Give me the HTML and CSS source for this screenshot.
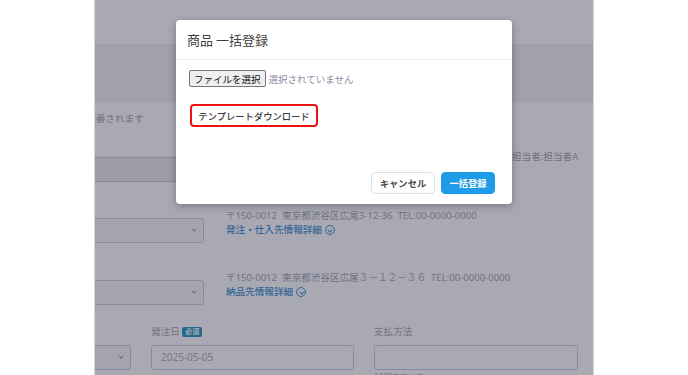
FILE: index.html
```html
<!DOCTYPE html>
<html lang="ja">
<head>
    <meta charset="UTF-8">
    <meta name="viewport" content="width=device-width, initial-scale=1.0">
    <title>商品 一括登録</title>
    <link rel="stylesheet" href="styles.css">
</head>
<body>
    <div class="shot">
        <div class="page">
            <div class="topbar"></div>
            <div class="titlebar"></div>

            <div class="form">
                <p class="note">自動採番されます</p>

                <div class="row row-first">
                    <div class="input filled wide"></div>
                    <span class="staff">担当者:担当者A</span>
                </div>

                <div class="row row-addr">
                    <div class="select short"><span class="chev"></span></div>
                    <div class="addr">
                        <div class="addr-text">〒150-0012&nbsp; 東京都渋谷区広尾3-12-36&nbsp; TEL:00-0000-0000</div>
                        <a class="addr-link">発注・仕入先情報詳細<span class="circle-chev"></span></a>
                    </div>
                </div>

                <div class="row row-addr">
                    <div class="select short"><span class="chev"></span></div>
                    <div class="addr">
                        <div class="addr-text">〒150-0012&nbsp; 東京都渋谷区広尾３－１２－３６&nbsp; TEL:00-0000-0000</div>
                        <a class="addr-link">納品先情報詳細<span class="circle-chev"></span></a>
                    </div>
                </div>

                <div class="row row-fields">
                    <div class="field field-small">
                        <div class="label">&nbsp;</div>
                        <div class="select tiny"><span class="chev"></span></div>
                    </div>
                    <div class="field field-date">
                        <div class="label">発注日 <span class="badge">必須</span></div>
                        <div class="input">2025-05-05</div>
                    </div>
                    <div class="field field-pay">
                        <div class="label">支払方法</div>
                        <div class="input"></div>
                        <div class="hint">1000文字以内</div>
                    </div>
                </div>
            </div>
        </div>

        <div class="backdrop"></div>

        <div class="modal">
            <div class="modal-header">商品 一括登録</div>
            <div class="modal-body">
                <div class="file-row">
                    <button class="file-btn">ファイルを選択</button>
                    <span class="file-name">選択されていません</span>
                </div>
                <button class="btn-template">テンプレートダウンロード</button>
            </div>
            <div class="modal-footer">
                <button class="btn btn-cancel">キャンセル</button>
                <button class="btn btn-primary">一括登録</button>
            </div>
        </div>
    </div>
</body>
</html>
```

FILE: styles.css
```css
* {
    box-sizing: border-box;
}
body {
    margin: 0;
    background: #fff;
    font-family: "Noto Sans", "Noto Sans CJK JP", sans-serif;
}
.shot {
    position: relative;
    width: 500px;
    height: 375px;
    margin-left: 94px;
    overflow: hidden;
    border-left: 1px solid #d6d6d6;
    border-right: 1px solid #d6d6d6;
}
.page {
    background: #fff;
    height: 100%;
}
.topbar {
    height: 44px;
    background: #fff;
}
.titlebar {
    height: 58px;
    background: #f3f2f4;
}
.form {
    font-size: 9.6px;
    color: #abaab6;
}
.note {
    margin: 10px 0 0;
    line-height: 14px;
    text-indent: -28px;
    white-space: nowrap;
}
.row {
    display: flex;
    align-items: flex-start;
}
.row-first {
    margin-top: 31px;
}
.input {
    height: 25px;
    border: 1px solid #cfcfd7;
    border-radius: 3px;
    background: #fff;
    padding-left: 9px;
    line-height: 23px;
    color: #b4b3be;
    font-size: 10px;
}
.input.filled {
    background: #ebebee;
}
.wide {
    width: 400px;
    margin-left: -10px;
}
.staff {
    margin-left: 27px;
    margin-top: -8px;
    white-space: nowrap;
}
.select {
    position: relative;
    height: 25px;
    border: 1px solid #cfcfd7;
    border-radius: 3px;
    background: #f7f7f9;
}
.short {
    width: 120px;
    margin-left: -11px;
}
.tiny {
    width: 47px;
    margin-left: -11px;
}
.chev {
    position: absolute;
    right: 7px;
    top: 8px;
    width: 4px;
    height: 4px;
    border-right: 1px solid #a8a7b2;
    border-bottom: 1px solid #a8a7b2;
    transform: rotate(45deg);
}
.row-addr {
    margin-top: 36px;
}
.row-addr + .row-addr {
    margin-top: 37px;
}
.addr {
    margin-left: 22px;
    margin-top: -9px;
    line-height: 14px;
}
.addr-text {
    white-space: nowrap;
}
.addr-link {
    display: inline-flex;
    align-items: center;
    color: #4d9ad3;
    font-weight: 500;
}
.circle-chev {
    position: relative;
    width: 10px;
    height: 10px;
    margin-left: 3px;
    border: 1px solid #4d9ad3;
    border-radius: 50%;
}
.circle-chev::after {
    content: "";
    position: absolute;
    left: 2.5px;
    top: 1.5px;
    width: 3px;
    height: 3px;
    border-right: 1px solid #4d9ad3;
    border-bottom: 1px solid #4d9ad3;
    transform: rotate(45deg);
}
.row-fields {
    margin-top: 19px;
}
.field .label {
    height: 16px;
    line-height: 16px;
    margin-bottom: 5px;
    white-space: nowrap;
}
.field-date {
    margin-left: 20px;
    width: 203px;
}
.field-pay {
    margin-left: 20px;
    width: 204px;
}
.badge {
    display: inline-block;
    background: #2f9fc0;
    color: #fff;
    font-size: 7px;
    font-weight: 700;
    line-height: 10px;
    padding: 0 3px;
    border-radius: 2px;
    vertical-align: 1px;
}
.hint {
    font-size: 8px;
    margin-top: 1px;
}
.backdrop {
    position: absolute;
    inset: 0;
    background: rgba(9, 8, 38, 0.35);
}
.modal {
    position: absolute;
    left: 81px;
    top: 20px;
    width: 336px;
    background: #fff;
    border-radius: 4px;
    box-shadow: 0 2px 8px rgba(0, 0, 0, 0.3);
    font-family: "Noto Sans CJK JP", sans-serif;
}
.modal-header {
    height: 40px;
    padding: 0 11px;
    line-height: 40px;
    font-size: 13px;
    color: #404040;
    border-bottom: 1px solid #ebebef;
}
.modal-body {
    padding: 10px 13px 35px;
}
.file-row {
    display: flex;
    align-items: center;
    height: 17px;
    font-size: 9.5px;
}
.file-btn {
    height: 17px;
    padding: 0 4px;
    font-family: inherit;
    font-size: 9.5px;
    color: #111;
    background: #efefef;
    border: 1px solid #767676;
    border-radius: 2px;
}
.file-name {
    margin-left: 3px;
    color: #8e8ca6;
}
.btn-template {
    display: block;
    width: 128px;
    height: 23px;
    margin: 17px 0 0 1px;
    font-family: inherit;
    font-size: 9.3px;
    font-weight: 500;
    color: #3a3a3a;
    background: #fff;
    border: 2px solid #ee1111;
    border-radius: 4px;
}
.modal-footer {
    display: flex;
    justify-content: flex-end;
    gap: 6px;
    padding: 10px 17px;
}
.btn {
    height: 22px;
    font-family: inherit;
    font-size: 9.3px;
    font-weight: 700;
    border-radius: 4px;
}
.btn-cancel {
    width: 64px;
    color: #4a4a4a;
    background: #fff;
    border: 1px solid #dcdfe8;
}
.btn-primary {
    width: 54px;
    color: #fff;
    background: #1e9be9;
    border: 1px solid #1e9be9;
}
```
